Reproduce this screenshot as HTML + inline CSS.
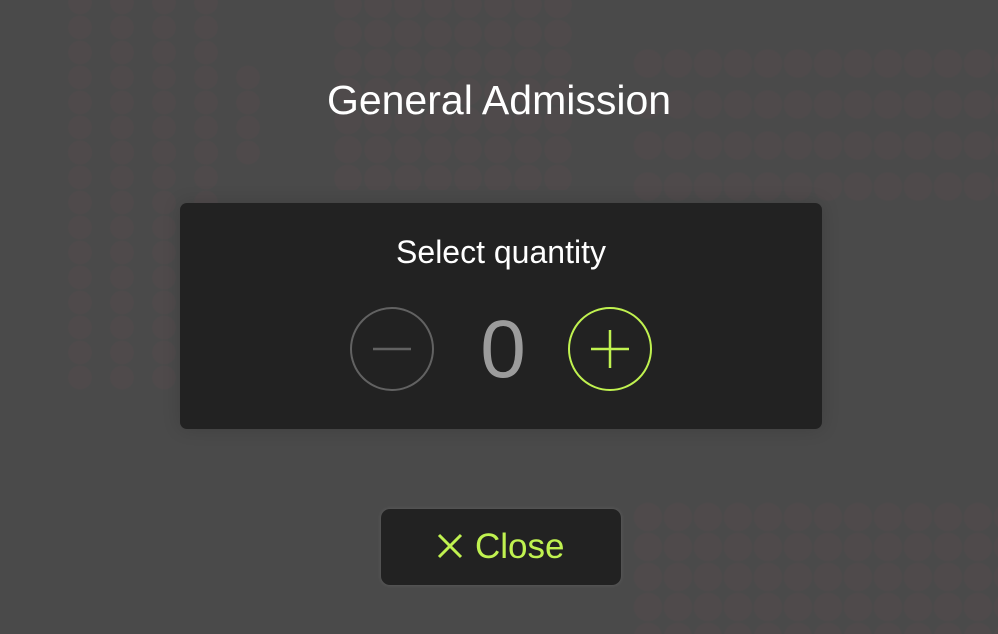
<!DOCTYPE html>
<html><head><style>
html,body{margin:0;padding:0}
body{width:998px;height:634px;background:#4a4a4a;position:relative;overflow:hidden;font-family:"Liberation Sans",Arial,sans-serif}
.dots{position:absolute;background-image:radial-gradient(circle closest-side,#4f4a4b 90%,rgba(74,74,74,0) 100%)}
h1{position:absolute;top:77px;left:0;width:998px;text-align:center;margin:0;font-weight:400;font-size:41px;color:#fff}
.card{position:absolute;left:180px;top:203px;width:642px;height:226px;background:#222;border-radius:7px;box-shadow:0 0 18px rgba(0,0,0,.15)}
.card .t{position:absolute;top:31px;width:100%;text-align:center;color:#fff;font-size:32px}
.c{position:absolute;width:84px;height:84px;border-radius:50%;box-sizing:border-box}
.minus{left:170px;top:104px;border:2px solid #626262}
.plus{left:388px;top:104px;border:2px solid #c0f250}
.num{position:absolute;left:286px;top:104px;width:74px;text-align:center;font-size:82px;color:#9c9c9c;line-height:86px}
.btn{position:absolute;left:381px;top:509px;width:240px;height:76px;background:#222;border-radius:9px;box-shadow:0 0 4px rgba(255,255,255,.12)}
.btn span{position:absolute;left:94px;top:18px;font-size:35px;color:#c0f250}
</style></head><body>
<div class="dots" style="left:59px;top:-10px;width:168px;height:75px;background-size:42px 25px"></div>
<div class="dots" style="left:59px;top:65px;width:210px;height:100px;background-size:42px 25px"></div>
<div class="dots" style="left:59px;top:140px;width:168px;height:250px;background-size:42px 25px"></div>
<div class="dots" style="left:333px;top:-10px;width:240px;height:200px;background-size:30px 29px"></div>
<div class="dots" style="left:633px;top:43px;width:380px;height:164px;background-size:30px 41px"></div>
<div class="dots" style="left:633px;top:502px;width:380px;height:132px;background-size:30px 30px"></div>
<h1>General Admission</h1>
<div class="card">
<div class="t">Select quantity</div>
<div class="c minus"><svg width="80" height="80" style="position:absolute;left:0;top:0"><line x1="21" y1="40" x2="59" y2="40" stroke="#626262" stroke-width="2.5"/></svg></div>
<div class="num">0</div>
<div class="c plus"><svg width="80" height="80" style="position:absolute;left:0;top:0"><line x1="21" y1="40" x2="59" y2="40" stroke="#c0f250" stroke-width="2.5"/><line x1="40" y1="21" x2="40" y2="59" stroke="#c0f250" stroke-width="2.5"/></svg></div>
</div>
<div class="btn"><svg width="30" height="30" style="position:absolute;left:55px;top:23px"><path d="M3 3L25 25M25 3L3 25" stroke="#c0f250" stroke-width="3"/></svg><span>Close</span></div>
</body></html>
